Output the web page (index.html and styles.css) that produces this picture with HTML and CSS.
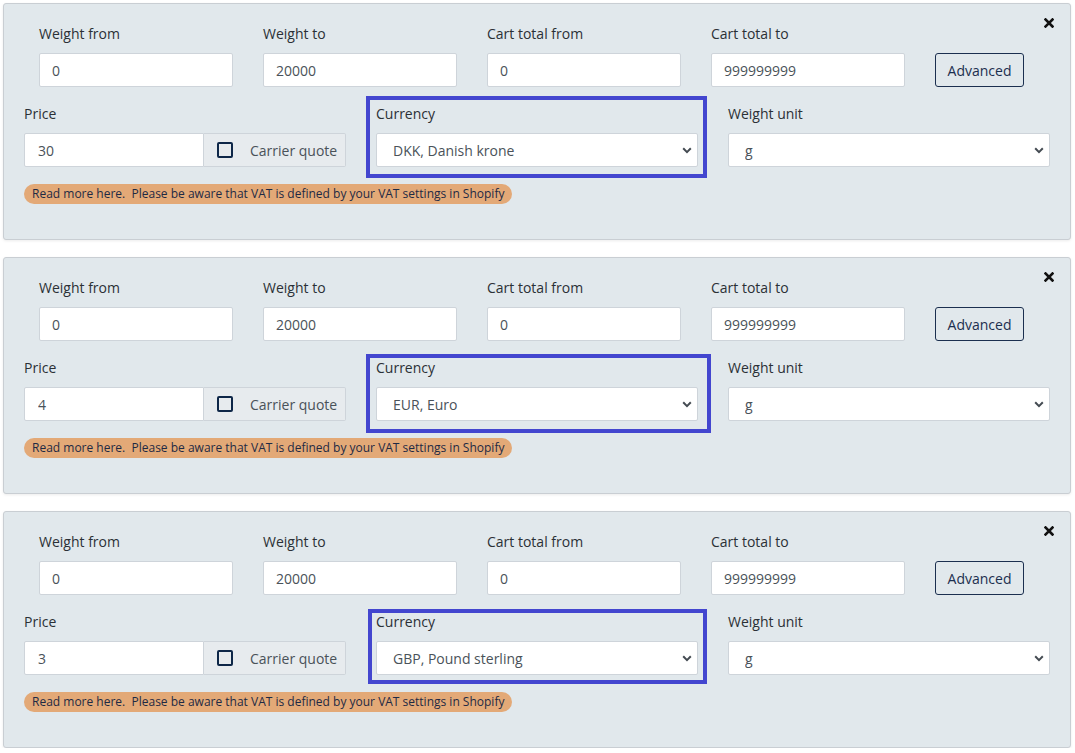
FILE: index.html
```html
<!DOCTYPE html>
<html>
<head>
<meta charset="utf-8">
<link rel="stylesheet" href="styles.css">
</head>
<body>
<div class="list">

  <div class="card">
    <button class="close" aria-label="Remove"><svg width="10" height="10" viewBox="0 0 10 10"><path d="M1.5 1.5L8.5 8.5M8.5 1.5L1.5 8.5" stroke="#111" stroke-width="2.6" stroke-linecap="square"/></svg></button>
    <div class="row1">
      <div class="field"><label>Weight from</label><input class="input" value="0"></div>
      <div class="field"><label>Weight to</label><input class="input" value="20000"></div>
      <div class="field"><label>Cart total from</label><input class="input" value="0"></div>
      <div class="field"><label>Cart total to</label><input class="input" value="999999999"></div>
      <button class="btn-adv">Advanced</button>
    </div>
    <div class="row2">
      <div class="field"><label>Price</label>
        <div class="group"><input class="input grow" value="30"><span class="addon"><span class="check"></span>Carrier quote</span></div>
      </div>
      <div class="field hl hl-a"><label>Currency</label>
        <select class="select"><option>DKK, Danish krone</option></select>
      </div>
      <div class="field"><label>Weight unit</label>
        <select class="select"><option>g</option></select>
      </div>
    </div>
    <div class="badge">Read more here.&nbsp;&nbsp;Please be aware that VAT is defined by your VAT settings in Shopify</div>
  </div>

  <div class="card">
    <button class="close" aria-label="Remove"><svg width="10" height="10" viewBox="0 0 10 10"><path d="M1.5 1.5L8.5 8.5M8.5 1.5L1.5 8.5" stroke="#111" stroke-width="2.6" stroke-linecap="square"/></svg></button>
    <div class="row1">
      <div class="field"><label>Weight from</label><input class="input" value="0"></div>
      <div class="field"><label>Weight to</label><input class="input" value="20000"></div>
      <div class="field"><label>Cart total from</label><input class="input" value="0"></div>
      <div class="field"><label>Cart total to</label><input class="input" value="999999999"></div>
      <button class="btn-adv">Advanced</button>
    </div>
    <div class="row2">
      <div class="field"><label>Price</label>
        <div class="group"><input class="input grow" value="4"><span class="addon"><span class="check"></span>Carrier quote</span></div>
      </div>
      <div class="field hl hl-b"><label>Currency</label>
        <select class="select"><option>EUR, Euro</option></select>
      </div>
      <div class="field"><label>Weight unit</label>
        <select class="select"><option>g</option></select>
      </div>
    </div>
    <div class="badge">Read more here.&nbsp;&nbsp;Please be aware that VAT is defined by your VAT settings in Shopify</div>
  </div>

  <div class="card">
    <button class="close" aria-label="Remove"><svg width="10" height="10" viewBox="0 0 10 10"><path d="M1.5 1.5L8.5 8.5M8.5 1.5L1.5 8.5" stroke="#111" stroke-width="2.6" stroke-linecap="square"/></svg></button>
    <div class="row1">
      <div class="field"><label>Weight from</label><input class="input" value="0"></div>
      <div class="field"><label>Weight to</label><input class="input" value="20000"></div>
      <div class="field"><label>Cart total from</label><input class="input" value="0"></div>
      <div class="field"><label>Cart total to</label><input class="input" value="999999999"></div>
      <button class="btn-adv">Advanced</button>
    </div>
    <div class="row2">
      <div class="field"><label>Price</label>
        <div class="group"><input class="input grow" value="3"><span class="addon"><span class="check"></span>Carrier quote</span></div>
      </div>
      <div class="field hl hl-c"><label>Currency</label>
        <select class="select"><option>GBP, Pound sterling</option></select>
      </div>
      <div class="field"><label>Weight unit</label>
        <select class="select"><option>g</option></select>
      </div>
    </div>
    <div class="badge">Read more here.&nbsp;&nbsp;Please be aware that VAT is defined by your VAT settings in Shopify</div>
  </div>

</div>
</body>
</html>
```
FILE: styles.css
```css
* { box-sizing: border-box; }
html, body { margin: 0; padding: 0; background: #fff; }
body {
  font-family: "Open Sans", Lato, sans-serif;
  font-size: 14px;
  color: #2b3036;
  padding: 3px 4px 0 3px;
}
.list { display: flex; flex-direction: column; gap: 17px; }
.card {
  position: relative;
  width: 1068px;
  background: #e1e8ec;
  border: 1px solid #c9ced3;
  border-radius: 3px;
  box-shadow: 0 1px 3px rgba(0,0,0,0.08);
  padding: 20px 21px 35px 20px;
}
.close {
  position: absolute;
  top: 14px;
  right: 16px;
  border: 0;
  background: none;
  padding: 0;
  width: 10px;
  height: 10px;
  cursor: pointer;
  display: flex;
}
.field { display: flex; flex-direction: column; }
label { display: block; line-height: 20px; margin-bottom: 9px; font-size: 14px; color: #2b3036; }
.row1 {
  display: grid;
  grid-template-columns: 194px 194px 194px 194px 89px;
  column-gap: 30px;
  align-items: end;
  padding-left: 15px;
}
.input, .select {
  height: 34px;
  border: 1px solid #ced4da;
  border-radius: 2px;
  background: #fff;
  font-family: inherit;
  font-size: 14px;
  color: #4a5259;
  padding: 0 12px;
  outline: none;
  width: 100%;
}
.btn-adv {
  height: 34px;
  border: 1px solid #1b2f4f;
  border-radius: 3px;
  background: transparent;
  color: #1b2f4f;
  font-family: inherit;
  font-size: 14px;
  font-weight: 500;
  padding: 0;
  width: 89px;
}
.row2 {
  display: grid;
  grid-template-columns: 322px 322px 322px;
  column-gap: 30px;
  margin-top: 17px;
}
.group { display: flex; height: 34px; }
.group .grow { flex: 1; border-radius: 2px 0 0 2px; padding-left: 13px; }
.addon {
  width: 142px;
  flex: none;
  display: flex;
  align-items: center;
  gap: 17px;
  padding-left: 13px;
  background: #e7ebee;
  border: 1px solid #ced4da;
  border-left: 0;
  border-radius: 0 2px 2px 0;
  color: #4a5259;
  white-space: nowrap;
}
.check {
  width: 16px;
  height: 16px;
  border: 2px solid #0e2748;
  border-radius: 2px;
  background: transparent;
  flex: none;
}
.select {
  appearance: none;
  -webkit-appearance: none;
  padding-left: 16px;
  background-image: url("data:image/svg+xml,%3Csvg xmlns='http://www.w3.org/2000/svg' width='10' height='7' viewBox='0 0 10 7'%3E%3Cpath d='M1.2 1.3L5 5.1L8.8 1.3' fill='none' stroke='%23444b52' stroke-width='2'/%3E%3C/svg%3E");
  background-repeat: no-repeat;
  background-position: right 5px center;
}
.hl { position: relative; }
.hl::before {
  content: "";
  position: absolute;
  border: 4px solid #4346cf;
  pointer-events: none;
}
.hl-a::before { left: -10px; right: -9px; top: -8px; bottom: -11px; }
.hl-b::before { left: -10px; right: -13px; top: -4px; bottom: -12px; }
.hl-c::before { left: -8px; right: -9px; top: -3px; bottom: -9px; }
.badge {
  align-self: flex-start;
  display: inline-block;
  margin-top: 17px;
  height: 20px;
  line-height: 20px;
  padding: 0 8px;
  background: #e3a977;
  border-radius: 10px;
  font-size: 12px;
  color: #1e2a44;
  white-space: pre;
}
```
